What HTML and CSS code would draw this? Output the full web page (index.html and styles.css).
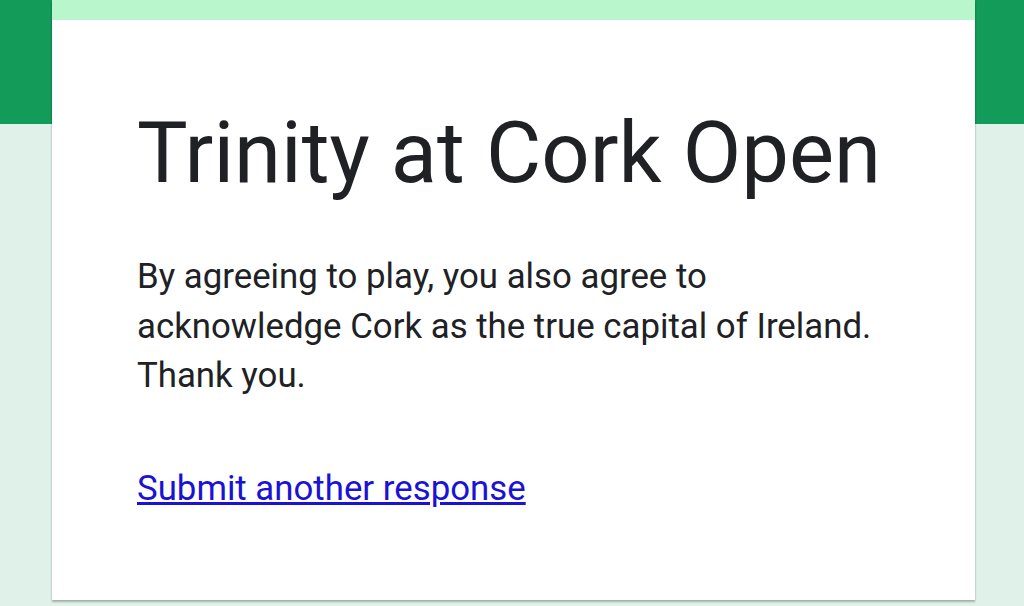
FILE: index.html
```html
<!DOCTYPE html>
<html>
<head>
<meta charset="utf-8">
<link rel="stylesheet" href="styles.css">
</head>
<body>
<main class="card">
  <h1 class="title">Trinity at Cork Open</h1>
  <p class="message">By agreeing to play, you also agree to acknowledge Cork as the true capital of Ireland. Thank you.</p>
  <a class="another" href="#">Submit another response</a>
</main>
</body>
</html>
```
FILE: styles.css
```css
html, body {
  margin: 0;
  padding: 0;
}
body {
  width: 1024px;
  height: 606px;
  overflow: hidden;
  background: linear-gradient(#139b59 0, #139b59 124px, #e0f1e9 124px);
  font-family: Roboto, "Noto Sans", sans-serif;
}
.card {
  margin-left: 52px;
  width: 923px;
  height: 600px;
  box-sizing: border-box;
  background: #fff;
  border-top: 20px solid #b9f6cb;
  padding: 83px 0 0 85px;
  box-shadow: 0 2px 2px rgba(0,0,0,0.25), 0 0 2px rgba(0,0,0,0.12);
}
.title {
  margin: 0;
  font-size: 85px;
  line-height: 100px;
  font-weight: 400;
  color: #202124;
}
.message {
  margin: 49px 0 0;
  width: 750px;
  font-size: 34.8px;
  line-height: 49.5px;
  color: #202124;
}
.another {
  display: inline-block;
  margin-top: 63.5px;
  font-size: 34.8px;
  line-height: 49.5px;
  color: #1a12d4;
}
```
